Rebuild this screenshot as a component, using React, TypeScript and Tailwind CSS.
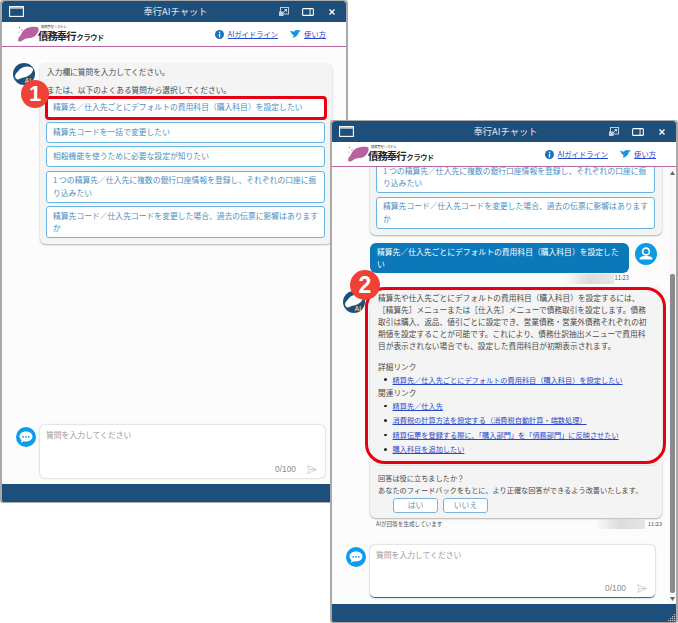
import React from "react";

const Pink = () => (
  <svg width="21" height="16" viewBox="0 0 21 16" className="shrink-0">
    <path d="M0.5 15.5 C-0.5 12.5 1 11 2.5 9.5 C3.5 7 5 4 8 2.5 C11 0.8 16 0.5 19 1 C21 1.5 21 4 20 6 C18.5 9 16.5 11 13.5 11.8 C11 12.5 8.5 12 6.5 13.2 C4.5 14.5 3 16 0.5 15.5Z" fill="#b9619f" />
    <circle cx="1.5" cy="1.5" r="0.7" fill="#b9619f" />
    <circle cx="4" cy="4" r="0.7" fill="#b9619f" />
    <circle cx="1" cy="6" r="0.6" fill="#b9619f" />
  </svg>
);

const BotAvatar = () => (
  <svg width="22" height="22" viewBox="0 0 22 22">
    <circle cx="11" cy="11" r="11" fill="#1d4f7c" />
    <path d="M2 13.5 C2 11 3.5 10 5 8.5 C6.5 6 9 4 13 3.5 C16.5 3.2 19.5 4.2 20 6 C20.2 8.5 18.5 11 15 13 C12 14.5 9 14.5 7 15.8 C5 17 2.5 16.5 2 13.5Z" fill="#ffffff" />
    <text x="11.5" y="20" fontSize="6.5" fontWeight="700" fill="#e8c64a" fontFamily="Liberation Sans, sans-serif">AI</text>
  </svg>
);

const UserAvatar = () => (
  <svg width="22" height="22" viewBox="0 0 22 22">
    <circle cx="11" cy="11" r="11" fill="#0d9be6" />
    <circle cx="11" cy="8.5" r="3.4" fill="none" stroke="#fff" strokeWidth="1.7" />
    <path d="M4.5 16.5 C4.5 13.5 7.5 13 11 13 C14.5 13 17.5 13.5 17.5 16.5 Z" fill="#fff" />
  </svg>
);

const ChatIcon = () => (
  <svg width="20" height="20" viewBox="0 0 20 20" className="shrink-0">
    <circle cx="10" cy="10" r="10" fill="#0b9ded" />
    <path d="M10 4.5 C14 4.5 16.5 6.8 16.5 9.6 C16.5 12.4 14 14.5 10 14.5 C9.2 14.5 8.5 14.4 7.8 14.2 L4.8 15.8 L5.6 13 C4.2 12.1 3.5 10.9 3.5 9.6 C3.5 6.8 6 4.5 10 4.5Z" fill="#fff" />
    <circle cx="7.2" cy="9.8" r="0.9" fill="#0b9ded" />
    <circle cx="10" cy="9.8" r="0.9" fill="#0b9ded" />
    <circle cx="12.8" cy="9.8" r="0.9" fill="#0b9ded" />
  </svg>
);

const Send = () => (
  <svg width="10" height="9" viewBox="0 0 10 9">
    <path d="M0.5 0.5 L9.5 4.5 L0.5 8.5 L2 4.5 Z M2 4.5 H9.5" fill="none" stroke="#c4c8cc" strokeWidth="0.8" />
  </svg>
);

const Header = () => (
  <div className="flex h-[21px] shrink-0 items-center rounded-t-[3px] bg-[#1d4f7a] pl-[7px] pr-[11px]">
    <svg width="15" height="11" viewBox="0 0 15 11">
      <rect x="0.6" y="0.6" width="13.8" height="9.8" fill="none" stroke="#fff" strokeWidth="1.1" />
      <rect x="1" y="1" width="13" height="1.8" fill="#b9c8d6" />
    </svg>
    <div className="flex-1 whitespace-nowrap pl-[48px] text-center text-[9.3px] text-[#e3e9ee]">奉行AIチャット</div>
    <div className="flex items-center">
      <svg width="10" height="9" viewBox="0 0 10 9">
        <rect x="1.5" y="0.5" width="8" height="6.5" fill="none" stroke="#c3ced8" strokeWidth="1" />
        <rect x="0" y="4.5" width="4.5" height="4.5" fill="#c3ced8" />
        <path d="M4.5 5.5 L7.5 2.5 M5.5 2.5 H7.5 V4.5" stroke="#fff" strokeWidth="0.8" fill="none" />
      </svg>
      <svg width="12" height="8" viewBox="0 0 12 8" className="ml-[13px]">
        <rect x="0.6" y="0.6" width="10.8" height="6.8" rx="1" fill="none" stroke="#fff" strokeWidth="1.1" />
        <rect x="7.6" y="0.6" width="0.9" height="6.8" fill="#fff" />
      </svg>
      <svg width="6" height="6" viewBox="0 0 6 6" className="ml-[15px]">
        <path d="M0.5 0.5 L5.5 5.5 M5.5 0.5 L0.5 5.5" stroke="#fff" strokeWidth="1.4" />
      </svg>
    </div>
  </div>
);

const LogoBar = () => (
  <div className="flex h-[25px] shrink-0 items-center border-b-[1.5px] border-[#b9689f] bg-white pl-[16px] pr-[20px]">
    <div className="relative flex items-end">
      <Pink />
      <span className="absolute left-[23px] top-[-1px] whitespace-nowrap text-[3.2px] leading-[4px] text-[#333]">債務管理システム</span>
      <span className="ml-[-1px] whitespace-nowrap text-[10.3px] font-bold leading-[13px] tracking-[-0.9px] text-[#222]">債務奉行</span>
      <span className="ml-[1px] whitespace-nowrap text-[7.2px] font-bold leading-[10px] tracking-[-0.4px] text-[#222]">クラウド</span>
    </div>
    <div className="ml-auto flex items-center">
      <svg width="9" height="9" viewBox="0 0 9 9">
        <circle cx="4.5" cy="4.5" r="4.5" fill="#1b72b8" />
        <rect x="3.9" y="3.7" width="1.3" height="3.6" fill="#fff" />
        <rect x="3.9" y="1.7" width="1.3" height="1.3" fill="#fff" />
      </svg>
      <a className="ml-[4px] whitespace-nowrap text-[7.3px] leading-[10px] text-[#2a49c9] underline">AIガイドライン</a>
      <svg width="11" height="8" viewBox="0 0 11 8" className="ml-[12px]">
        <path d="M0 0.5 L3.5 1.8 L6 0 L11 0.5 L8.8 2.2 C8.2 5 6 7 3 8 L3.5 5.3 C2 4.3 0.8 2.5 0 0.5Z" fill="#1596e4" />
      </svg>
      <a className="ml-[3px] whitespace-nowrap text-[7.3px] leading-[10px] text-[#2a49c9] underline">使い方</a>
    </div>
  </div>
);

const Opt = ({ children, tall }: { children: React.ReactNode; tall?: boolean }) => (
  <div className={`flex items-center rounded-[3px] border border-[#68b4e2] bg-white pl-[6px] pr-[3px] text-[7.8px] leading-[12.5px] text-[#4a8fc0] ${tall ? "h-[32px]" : "h-[21px]"}`}>
    <span>{children}</span>
  </div>
);

const Input = ({ active }: { active?: boolean }) => (
  <div className="flex shrink-0 items-start gap-[4px] pl-[14px] pr-[21px]">
    <div className="mt-[2px]"><ChatIcon /></div>
    <div className={`flex h-[53px] flex-1 flex-col rounded-[5px] bg-white px-[6px] pb-[3px] pt-[4px] shadow-[0_0_2px_rgba(0,0,0,0.35)] ${active ? "border-b-[1.5px] border-[#1578bb]" : ""}`}>
      <div className="text-[7.8px] leading-[12px] text-[#9a9a9a]">質問を入力してください</div>
      <div className="mt-auto flex items-center justify-end gap-[11px] pr-[2px] font-['Liberation_Sans'] text-[8.4px] leading-[12px] text-[#8d8d8d]">
        <span>0/100</span>
        <Send />
      </div>
    </div>
  </div>
);

const Win = ({ children, style }: { children: React.ReactNode; style: string }) => (
  <div className={`absolute flex w-[348px] flex-col overflow-hidden rounded-[3px] border-x-2 border-y border-[#a9a9a9] bg-[#fcfcfc] ${style}`}>
    <Header />
    <LogoBar />
    {children}
    <div className="mt-[6px] h-[18px] shrink-0 bg-[#1d4f7a]" />
  </div>
);

const Bubble = ({ children, className }: { children: React.ReactNode; className?: string }) => (
  <div className={`rounded-[6px] bg-[#f4f4f4] text-[7.7px] leading-[12px] text-[#4a4a4a] shadow-[0_1px_2px_rgba(0,0,0,0.3)] ${className ?? ""}`}>{children}</div>
);

const Li = ({ children, h }: { children: React.ReactNode; h: string }) => (
  <li className={`flex items-center ${h}`}>
    <span className="ml-[6px] mr-[6px] h-[2.5px] w-[2.5px] rounded-full bg-[#222]" />
    <a className="whitespace-nowrap text-[7.2px] text-[#2a49c9] underline">{children}</a>
  </li>
);

const Blur = ({ className }: { className: string }) => (
  <div className={`h-[10px] bg-gradient-to-r from-transparent via-[#dcdcdc] to-[#e6e6e6] ${className}`} />
);

const Grip = () => (
  <svg width="8" height="8" viewBox="0 0 8 8" className="absolute bottom-0 right-0">
    <g fill="#b8c6d2">
      <rect x="6" y="0" width="1.2" height="1.2" />
      <rect x="4" y="2" width="1.2" height="1.2" />
      <rect x="6" y="2" width="1.2" height="1.2" />
      <rect x="2" y="4" width="1.2" height="1.2" />
      <rect x="4" y="4" width="1.2" height="1.2" />
      <rect x="6" y="4" width="1.2" height="1.2" />
      <rect x="0" y="6" width="1.2" height="1.2" />
      <rect x="2" y="6" width="1.2" height="1.2" />
      <rect x="4" y="6" width="1.2" height="1.2" />
      <rect x="6" y="6" width="1.2" height="1.2" />
    </g>
  </svg>
);

export default function App() {
  return (
    <div className="relative h-[623px] w-[678px] overflow-hidden bg-white font-['Noto_Sans_CJK_JP','Noto_Sans',sans-serif]">
      <Win style="left-0 top-0 h-[503px]">
        <div className="flex min-h-0 flex-1 flex-col pt-[16px]">
          <div className="flex items-start gap-[5px] pl-[11px] pr-[14px]">
            <BotAvatar />
            <Bubble className="flex-1 px-[6px] pb-[6px] pt-[3px]">
              <div className="mb-[6px] pl-[1px]">入力欄に質問を入力してください。</div>
              <div className="mb-[1px] pl-[1px]">または、以下のよくある質問から選択してください。</div>
              <div className="flex flex-col gap-[3.5px] pr-[1px]">
                <Opt>精算先／仕入先ごとにデフォルトの費用科目（購入科目）を設定したい</Opt>
                <Opt>精算先コードを一括で変更したい</Opt>
                <Opt>相殺機能を使うために必要な設定が知りたい</Opt>
                <Opt tall>1 つの精算先／仕入先に複数の銀行口座情報を登録し、それぞれの口座に振り込みたい</Opt>
                <Opt tall>精算先コード／仕入先コードを変更した場合、過去の伝票に影響はありますか</Opt>
              </div>
            </Bubble>
          </div>
          <div className="mt-auto"><Input /></div>
        </div>
      </Win>

      <Win style="left-[330px] top-[120px] h-[503px]">
        <div className="relative flex min-h-0 flex-1 flex-col">
          <div className="min-h-0 flex-1 overflow-hidden pl-[11px] pr-[14px]">
            <div className="ml-[27px] mt-[-6px] rounded-b-[6px] bg-[#f4f4f4] px-[6px] pb-[6px] shadow-[0_1px_2px_rgba(0,0,0,0.3)]">
              <div className="flex flex-col gap-[3.5px] pr-[1px]">
                <Opt tall>1 つの精算先／仕入先に複数の銀行口座情報を登録し、それぞれの口座に振り込みたい</Opt>
                <Opt tall>精算先コード／仕入先コードを変更した場合、過去の伝票に影響はありますか</Opt>
              </div>
            </div>
            <div className="ml-[27px] mr-[-7px] mt-[8px] flex items-start gap-[6px]">
              <div className="flex h-[30px] w-[259px] items-center rounded-[6px] bg-[#0b78b9] px-[7px] text-[7.8px] leading-[12px] text-white">
                精算先／仕入先ごとにデフォルトの費用科目（購入科目）を設定したい
              </div>
              <UserAvatar />
            </div>
            <div className="ml-[27px] flex h-[12px] w-[259px] items-center justify-end text-[5.8px] text-[#555]">
              <Blur className="mr-[1px] w-[50px]" />
              <span>11:23</span>
            </div>
            <div className="mt-[2px] flex items-start gap-[5px]">
              <div className="mt-[4px]"><BotAvatar /></div>
              <Bubble className="h-[231px] flex-1 pl-[8px] pr-[5px] pt-[5px]">
                <div className="whitespace-nowrap">
                  精算先や仕入先ごとにデフォルトの費用科目（購入科目）を設定するには、<br />
                  ［精算先］メニューまたは［仕入先］メニューで債務取引を設定します。債務<br />
                  取引は購入、返品、値引ごとに設定でき、営業債務・営業外債務それぞれの初<br />
                  期値を設定することが可能です。これにより、債務仕訳抽出メニューで費用科<br />
                  目が表示されない場合でも、設定した費用科目が初期表示されます。
                </div>
                <div className="mt-[9px]">詳細リンク</div>
                <ul>
                  <Li h="h-[14px]">精算先／仕入先ごとにデフォルトの費用科目（購入科目）を設定したい</Li>
                </ul>
                <div>関連リンク</div>
                <ul>
                  <Li h="h-[14.5px]">精算先／仕入先</Li>
                  <Li h="h-[14.5px]">消費税の計算方法を設定する（消費税自動計算・端数処理）</Li>
                  <Li h="h-[14.5px]">精算伝票を登録する際に、「購入部門」を「債務部門」に反映させたい</Li>
                  <Li h="h-[14.5px]">購入科目を追加したい</Li>
                </ul>
                <div className="mr-[2px] mt-[8px] border-t border-[#e2e2e2] pt-[6px] text-[7.2px]">
                  <div>回答は役に立ちましたか？</div>
                  <div>あなたのフィードバックをもとに、より正確な回答ができるよう改善いたします。</div>
                  <div className="ml-[15px] mt-[2px] flex gap-[5px] text-[7.8px]">
                    <div className="flex h-[15px] w-[45px] items-center justify-center rounded-[3px] border border-[#7fb0d6] bg-white text-[#5c93c2]">はい</div>
                    <div className="flex h-[15px] w-[45px] items-center justify-center rounded-[3px] border border-[#7fb0d6] bg-white text-[#5c93c2]">いいえ</div>
                  </div>
                </div>
              </Bubble>
            </div>
            <div className="ml-[27px] flex h-[13px] items-center text-[5.6px] text-[#555]">
              <span className="pl-[6px]">AIが回答を生成しています</span>
              <Blur className="ml-auto mr-[3px] w-[50px]" />
              <span>11:23</span>
            </div>
          </div>
          <Input active />

          <div className="absolute bottom-[-6px] right-0 top-0 flex w-[7px] flex-col items-center bg-[#f8f8f8]">
            <svg width="5" height="4" viewBox="0 0 5 4" className="mt-[4px]"><path d="M2.5 0 L5 4 H0Z" fill="#666" /></svg>
            <div className="mt-[99px] h-[319px] w-[5px] rounded-[2px] bg-[#8b8b8b]" />
            <svg width="5" height="4" viewBox="0 0 5 4" className="mt-[4px]"><path d="M2.5 4 L5 0 H0Z" fill="#666" /></svg>
          </div>
        </div>
        <Grip />
      </Win>

      <div className="pointer-events-none absolute left-[45px] top-[96px] h-[24px] w-[282px] rounded-[4px] border-[3px] border-[#e60012]" />
      <div className="absolute left-[21px] top-[80px] flex h-[28px] w-[28px] items-center justify-center rounded-full bg-[#ef4136] font-['Liberation_Sans'] text-[22px] font-bold leading-none text-white">1</div>

      <div className="pointer-events-none absolute left-[365px] top-[287px] h-[177px] w-[301px] rounded-[20px] border-[3px] border-[#e60012]" />
      <div className="absolute left-[350px] top-[270px] flex h-[30px] w-[30px] items-center justify-center rounded-full bg-[#ef4136] font-['Liberation_Sans'] text-[23px] font-bold leading-none text-white">2</div>
    </div>
  );
}
